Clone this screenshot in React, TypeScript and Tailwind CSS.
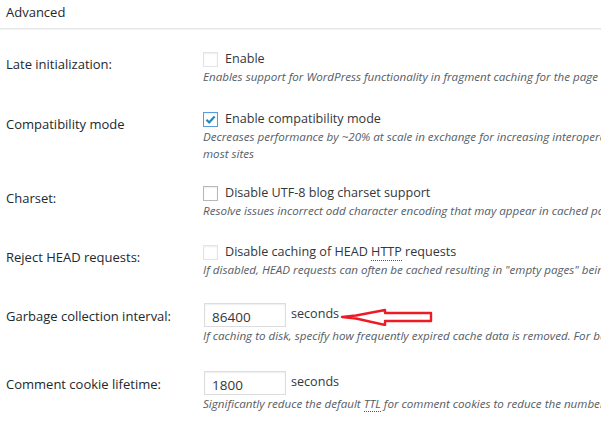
import React from "react";

const font = { fontFamily: '"Open Sans", "Noto Sans", sans-serif' };

function Box({ checked = false, disabled = false }: { checked?: boolean; disabled?: boolean }) {
  return (
    <span
      className={`inline-flex items-center justify-center w-[15px] h-[15px] shrink-0 bg-white border ${
        checked ? "border-[#5b9dd9]" : disabled ? "border-[#e2e4e7]" : "border-[#b4b9be]"
      } shadow-[inset_0_1px_2px_rgba(0,0,0,0.07)]`}
    >
      {checked && (
        <svg width="13" height="13" viewBox="0 0 13 13">
          <path d="M2.5 6.8 L5.2 9.5 L10.6 3.4" fill="none" stroke="#1e8cbe" strokeWidth="2.2" />
        </svg>
      )}
    </span>
  );
}

function Abbr({ children }: { children: React.ReactNode }) {
  return <span className="border-b border-dotted border-[#555]">{children}</span>;
}

function CheckRow({
  label,
  text,
  desc,
  checked,
  disabled,
  className,
}: {
  label: string;
  text: React.ReactNode;
  desc: React.ReactNode;
  checked?: boolean;
  disabled?: boolean;
  className?: string;
}) {
  return (
    <div className={`flex items-start ${className ?? ""}`}>
      <div className="w-[203px] shrink-0 pl-[6px] pt-[5px] text-[13px] leading-[18px] text-[#23282d]">{label}</div>
      <div className="flex flex-col">
        <div className="flex items-center gap-[7px] h-[18px] text-[12.6px] text-[#32373c] whitespace-nowrap">
          <Box checked={checked} disabled={disabled} />
          <span>{text}</span>
        </div>
        <div className="italic text-[11.6px] leading-[17px] text-[#555d66] whitespace-nowrap">{desc}</div>
      </div>
    </div>
  );
}

function InputRow({
  label,
  value,
  desc,
  arrow,
  className,
}: {
  label: string;
  value: string;
  desc: React.ReactNode;
  arrow?: boolean;
  className?: string;
}) {
  return (
    <div className={`flex items-start ${className ?? ""}`}>
      <div className="w-[203px] shrink-0 pl-[6px] pt-[4px] text-[13px] leading-[18px] text-[#23282d]">{label}</div>
      <div className="flex flex-col">
        <div className="flex items-start h-[24px] text-[12.6px] text-[#32373c] whitespace-nowrap">
          <span className="w-[82px] h-[24px] ml-[1px] border border-[#dddddd] shadow-[inset_0_1px_2px_rgba(0,0,0,0.07)] pl-[7px] flex items-center text-[13.5px] leading-[18px] pt-[3px] text-[#32373c]">
            {value}
          </span>
          <span className="ml-[5px] pt-[2px] leading-[18px]">seconds</span>
          {arrow && (
            <svg width="98" height="20" viewBox="0 0 98 20" className="ml-[1px] mt-[3px]">
              <path
                d="M2 11 L16 9.5 L45 4 L45 7 L91 7 L91 15 L45 15 L45 19 L16 12.5 Z"
                fill="none"
                stroke="#ed1c24"
                strokeWidth="2.4"
                strokeLinejoin="round"
              />
            </svg>
          )}
        </div>
        <div className="italic text-[11.6px] leading-[17px] text-[#555d66] whitespace-nowrap">{desc}</div>
      </div>
    </div>
  );
}

export default function App() {
  return (
    <div className="w-[601px] h-[427px] overflow-hidden bg-white" style={font}>
      <div className="h-[29px] pl-[6px] pt-[3px] text-[13px] leading-[19px] text-[#23282d] border-b border-[#e5e5e5]">
        Advanced
      </div>
      <div className="h-px bg-[#f3f3f3]" />

      <CheckRow
        className="mt-[20px]"
        label="Late initialization:"
        text="Enable"
        disabled
        desc="Enables support for WordPress functionality in fragment caching for the page caching engine."
      />
      <CheckRow
        className="mt-[25px]"
        label="Compatibility mode"
        text="Enable compatibility mode"
        checked
        desc={
          <>
            Decreases performance by ~20% at scale in exchange for increasing interoperability with more hosting
            environments and WordPress idioms. This option should be enabled for
            <br />
            most sites
          </>
        }
      />
      <CheckRow
        className="mt-[22px]"
        label="Charset:"
        text="Disable UTF-8 blog charset support"
        desc="Resolve issues incorrect odd character encoding that may appear in cached pages."
      />
      <CheckRow
        className="mt-[24px]"
        label="Reject HEAD requests:"
        disabled
        text={
          <>
            Disable caching of HEAD <Abbr>HTTP</Abbr> requests
          </>
        }
        desc={'If disabled, HEAD requests can often be cached resulting in "empty pages" being returned for subsequent requests for a URL.'}
      />
      <InputRow
        className="mt-[25px]"
        label="Garbage collection interval:"
        value="86400"
        arrow
        desc="If caching to disk, specify how frequently expired cache data is removed. For busy sites, a lower value is best."
      />
      <InputRow
        className="mt-[27px]"
        label="Comment cookie lifetime:"
        value="1800"
        desc={
          <>
            Significantly reduce the default <Abbr>TTL</Abbr> for comment cookies to reduce the number of pages that
            aren't cached.
          </>
        }
      />
    </div>
  );
}
